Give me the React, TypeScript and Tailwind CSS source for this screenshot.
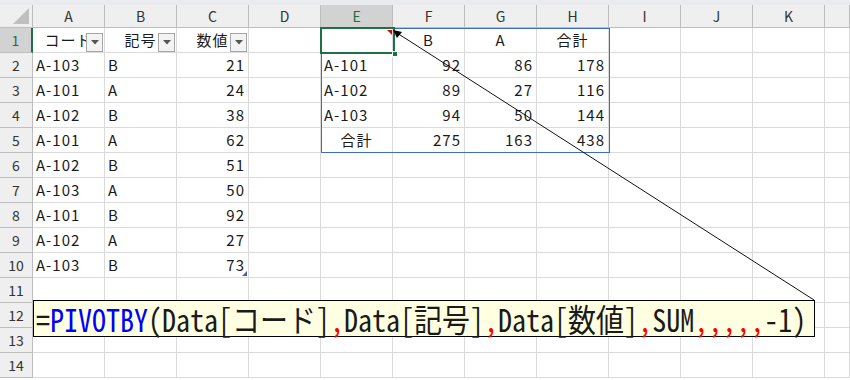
import React from "react";

const cols = ["A", "B", "C", "D", "E", "F", "G", "H", "I", "J", "K", ""];

type Cell = { text?: string; align?: "left" | "center" | "right"; filter?: boolean };

const data: [string, string, number][] = [
  ["A-103", "B", 21],
  ["A-101", "A", 24],
  ["A-102", "B", 38],
  ["A-101", "A", 62],
  ["A-102", "B", 51],
  ["A-103", "A", 50],
  ["A-101", "B", 92],
  ["A-102", "A", 27],
  ["A-103", "B", 73],
];

const pivot: [string, number, number, number][] = [
  ["A-101", 92, 86, 178],
  ["A-102", 89, 27, 116],
  ["A-103", 94, 50, 144],
];
const totals = [275, 163, 438];

function buildRows(): Cell[][] {
  const rows: Cell[][] = [];
  for (let r = 0; r < 14; r++) rows.push(cols.map(() => ({})));
  rows[0][0] = { text: "コード", align: "center", filter: true };
  rows[0][1] = { text: "記号", align: "center", filter: true };
  rows[0][2] = { text: "数値", align: "center", filter: true };
  rows[0][5] = { text: "B", align: "center" };
  rows[0][6] = { text: "A", align: "center" };
  rows[0][7] = { text: "合計", align: "center" };
  data.forEach((d, i) => {
    rows[i + 1][0] = { text: d[0], align: "left" };
    rows[i + 1][1] = { text: d[1], align: "left" };
    rows[i + 1][2] = { text: String(d[2]), align: "right" };
  });
  pivot.forEach((p, i) => {
    rows[i + 1][4] = { text: p[0], align: "left" };
    rows[i + 1][5] = { text: String(p[1]), align: "right" };
    rows[i + 1][6] = { text: String(p[2]), align: "right" };
    rows[i + 1][7] = { text: String(p[3]), align: "right" };
  });
  rows[4][4] = { text: "合計", align: "center" };
  totals.forEach((t, i) => {
    rows[4][5 + i] = { text: String(t), align: "right" };
  });
  return rows;
}

function FilterButton() {
  return (
    <div className="absolute right-[1px] top-[5px] w-[17px] h-[19px] border border-[#a6a6a6] bg-[#f3f3f3] flex items-center justify-center">
      <svg width="8" height="5" viewBox="0 0 8 5">
        <polygon points="0,0 8,0 4,4.5" fill="#555" />
      </svg>
    </div>
  );
}

const alignClass = {
  left: "justify-start pl-[3px]",
  center: "justify-center",
  right: "justify-end pr-[3px]",
};

export default function App() {
  const rows = buildRows();
  return (
    <div
      className="relative w-[850px] h-[380px] overflow-hidden bg-white text-[#1a1a1a]"
      style={{ fontFamily: '"Noto Sans CJK JP", "Noto Sans", sans-serif' }}
    >
      <div className="h-[5px] bg-[#e9ebee]" />
      {/* column headers */}
      <div className="grid grid-cols-[33px_repeat(11,72px)_1fr] h-[23px]">
        <div className="relative bg-[#efefef] border-r border-b border-[#bdbdbd]">
          <svg className="absolute right-[3px] bottom-[3px]" width="16" height="16" viewBox="0 0 16 16">
            <polygon points="16,0 16,16 0,16" fill="#bfbfbf" />
          </svg>
        </div>
        {cols.map((c, i) => (
          <div
            key={i}
            className={
              "flex items-center justify-center text-[14px] border-r border-b " +
              (c === "E"
                ? "bg-[#d2d2d2] text-[#1e6b41] border-r-[#bdbdbd] border-b-[#bdbdbd]"
                : "bg-[#efefef] text-[#333] border-[#bdbdbd]")
            }
          >
            {c}
          </div>
        ))}
      </div>
      {rows.map((row, r) => (
        <div key={r} className="grid grid-cols-[33px_repeat(11,72px)_1fr] h-[25px]">
          <div
            className={
              "flex items-center justify-center text-[14px] border-b " +
              (r === 0
                ? "bg-[#d2d2d2] text-[#1e6b41] border-r-2 border-r-[#1e7145] border-b-[#bdbdbd]"
                : "bg-[#efefef] text-[#333] border-r border-[#bdbdbd]")
            }
          >
            {r + 1}
          </div>
          {row.map((cell, c) => (
            <div
              key={c}
              className={
                "relative flex items-center pt-[1px] text-[15px] tracking-[1px] border-r border-b border-[#dadada] whitespace-nowrap " +
                alignClass[cell.align ?? "left"]
              }
            >
              {cell.text}
              {cell.filter && <FilterButton />}
              {r === 9 && c === 2 && (
                <svg className="absolute right-[1px] bottom-[1px]" width="5" height="5" viewBox="0 0 5 5">
                  <polygon points="5,0 5,5 0,5" fill="#4a5fb0" />
                </svg>
              )}
            </div>
          ))}
        </div>
      ))}

      {/* spill range border E1:H5 */}
      <div className="absolute left-[321px] top-[28px] w-[289px] h-[125px] border border-[#3c6cc4] pointer-events-none" />
      {/* selected cell E1 */}
      <div className="absolute left-[320px] top-[27px] w-[75px] h-[27px] border-2 border-[#1e7145]">
        <svg className="absolute right-[1px] top-[1px]" width="5" height="5" viewBox="0 0 5 5">
          <polygon points="0,0 5,0 5,5" fill="#e00000" />
        </svg>
        <div className="absolute -right-[5px] -bottom-[5px] w-[6px] h-[6px] bg-[#1e7145] border border-white" />
      </div>

      {/* callout line */}
      <svg className="absolute left-0 top-0 pointer-events-none" width="850" height="380">
        <line x1="397" y1="33" x2="814" y2="300" stroke="#111" strokeWidth="1" />
        <polygon points="393,30 402,32 397,38" fill="#000" />
      </svg>

      {/* formula callout */}
      <div className="absolute left-[33px] top-[300px] w-[782px] h-[37px] bg-[#ffffe1] border border-black flex items-center pl-[2px]">
        <span
          className="text-[28px] leading-none whitespace-nowrap inline-block origin-left scale-y-[1.12] font-light"
          style={{ fontFamily: '"Noto Sans Mono CJK JP", "Noto Sans CJK JP", monospace' }}
        >
          <span>=</span>
          <span className="text-[#0000ff]">PIVOTBY</span>
          <span>(Data[コード]</span>
          <span className="text-[#ff0000]">,</span>
          <span>Data[記号]</span>
          <span className="text-[#ff0000]">,</span>
          <span>Data[数値]</span>
          <span className="text-[#ff0000]">,</span>
          <span>SUM</span>
          <span className="text-[#ff0000]">,,,,,</span>
          <span>-1)</span>
        </span>
      </div>
    </div>
  );
}
